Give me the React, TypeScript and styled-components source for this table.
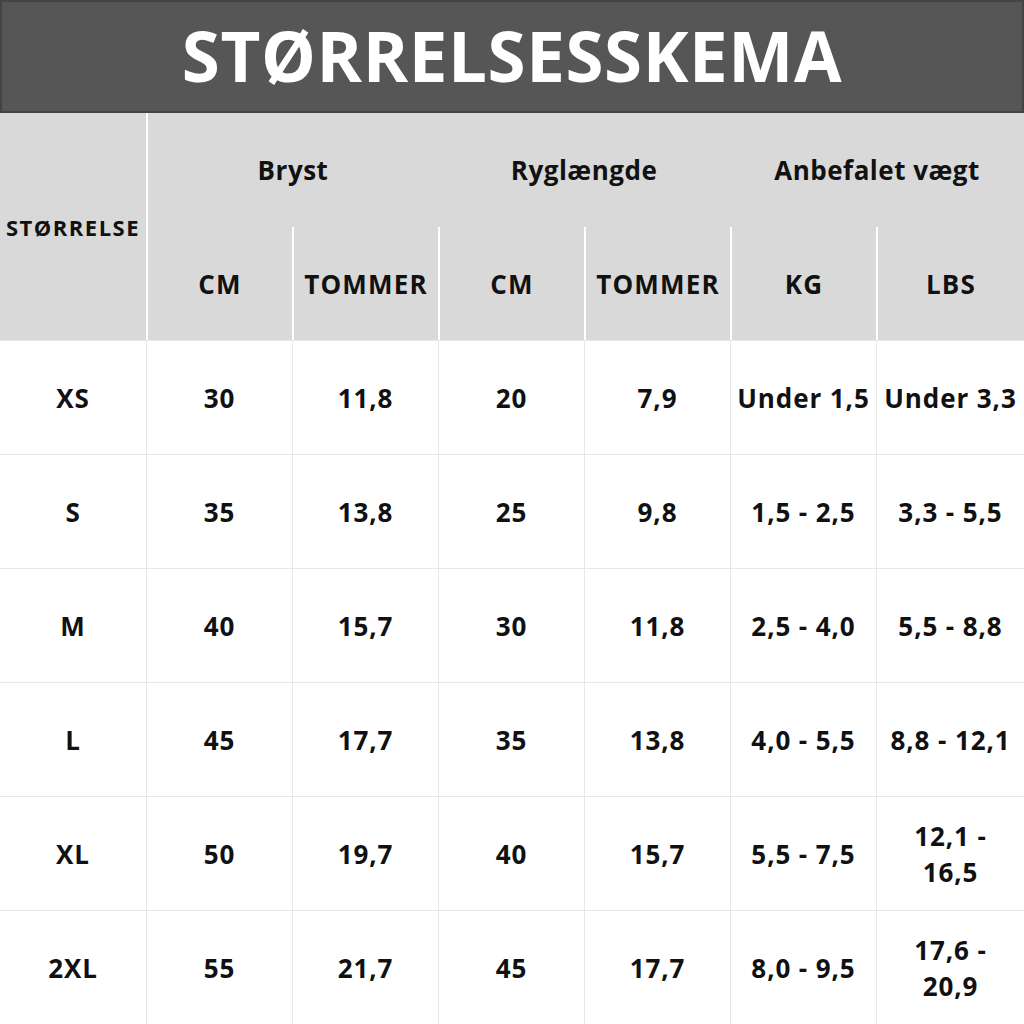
import React from "react";
import styled, { createGlobalStyle } from "styled-components";

const Global = createGlobalStyle`
  html, body { margin: 0; padding: 0; background: #ffffff; }
  body { font-family: "Open Sans", "Noto Sans", "DejaVu Sans", sans-serif; }
  * { box-sizing: border-box; }
`;

const Page = styled.div`
  width: 1024px;
  height: 1024px;
  display: flex;
  flex-direction: column;
  background: #ffffff;
  overflow: hidden;
`;

const Title = styled.h1`
  margin: 0;
  height: 113px;
  background: #565656;
  border: 2px solid #444444;
  color: #ffffff;
  font-size: 69px;
  font-weight: 700;
  letter-spacing: 0.6px;
  display: flex;
  align-items: center;
  justify-content: center;
  padding-bottom: 4px;
`;

const cols = "146px 146px 146px 146px 146px 146px 148px";

const HeaderGrid = styled.div`
  display: grid;
  grid-template-columns: ${cols};
  grid-template-rows: 114px 113px;
  background: #d9d9d9;
`;

const HeadCell = styled.div<{
  $col?: string;
  $row?: string;
  $line?: boolean;
  $size?: number;
  $ls?: number;
}>`
  grid-column: ${(p) => p.$col ?? "auto"};
  grid-row: ${(p) => p.$row ?? "auto"};
  display: flex;
  align-items: center;
  justify-content: center;
  text-align: center;
  font-weight: 700;
  font-size: ${(p) => p.$size ?? 26}px;
  letter-spacing: ${(p) => p.$ls ?? 1}px;
  color: #111111;
  border-left: ${(p) => (p.$line ? "2px solid #ffffff" : "none")};
  white-space: nowrap;
`;

const BodyGrid = styled.div`
  display: grid;
  grid-template-columns: ${cols};
  grid-auto-rows: 114px;
  flex: 1;
`;

const Cell = styled.div<{ $first?: boolean }>`
  display: flex;
  align-items: center;
  justify-content: center;
  text-align: center;
  font-weight: 700;
  font-size: 26px;
  letter-spacing: 0.9px;
  line-height: 36px;
  color: #111111;
  border-top: 1px solid #e7e7e7;
  border-left: ${(p) => (p.$first ? "none" : "1px solid #e7e7e7")};
  white-space: pre;
`;

const rows: string[][] = [
  ["XS", "30", "11,8", "20", "7,9", "Under 1,5", "Under 3,3"],
  ["S", "35", "13,8", "25", "9,8", "1,5 - 2,5", "3,3 - 5,5"],
  ["M", "40", "15,7", "30", "11,8", "2,5 - 4,0", "5,5 - 8,8"],
  ["L", "45", "17,7", "35", "13,8", "4,0 - 5,5", "8,8 - 12,1"],
  ["XL", "50", "19,7", "40", "15,7", "5,5 - 7,5", "12,1 -\n16,5"],
  ["2XL", "55", "21,7", "45", "17,7", "8,0 - 9,5", "17,6 -\n20,9"],
];

const groups = ["Bryst", "Ryglængde", "Anbefalet vægt"];
const subs = ["CM", "TOMMER", "CM", "TOMMER", "KG", "LBS"];

export default function App() {
  return (
    <Page>
      <Global />
      <Title>STØRRELSESSKEMA</Title>
      <HeaderGrid>
        <HeadCell $col="1" $row="1 / span 2" $size={22} $ls={1.5}>
          STØRRELSE
        </HeadCell>
        {groups.map((g, i) => (
          <HeadCell key={g} $col={`${2 + i * 2} / span 2`} $row="1" $line={i === 0} $ls={0.5}>
            {g}
          </HeadCell>
        ))}
        {subs.map((s, i) => (
          <HeadCell key={i} $col={`${2 + i}`} $row="2" $line $ls={1.2}>
            {s}
          </HeadCell>
        ))}
      </HeaderGrid>
      <BodyGrid>
        {rows.map((r, ri) =>
          r.map((v, ci) => (
            <Cell key={`${ri}-${ci}`} $first={ci === 0}>
              {v}
            </Cell>
          ))
        )}
      </BodyGrid>
    </Page>
  );
}
